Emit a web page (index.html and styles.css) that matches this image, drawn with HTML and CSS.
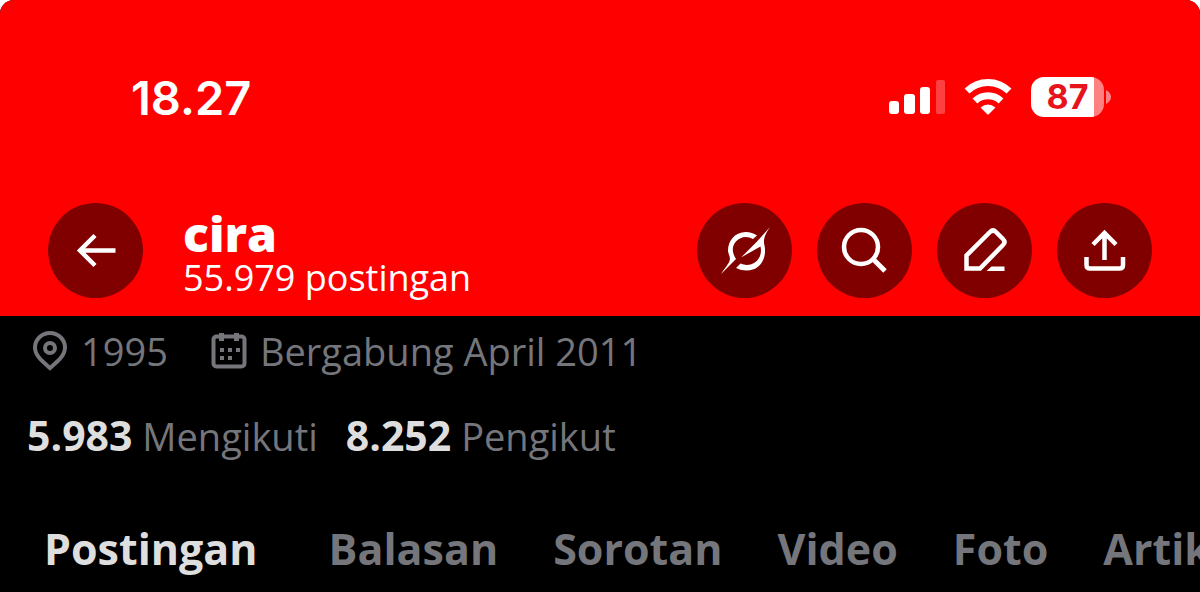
FILE: index.html
```html
<!DOCTYPE html>
<html lang="id">
<head>
    <meta charset="UTF-8">
    <meta name="viewport" content="width=device-width, initial-scale=1.0">
    <title>cira</title>
    <link rel="stylesheet" href="styles.css">
</head>
<body>
    <header class="banner">
        <div class="status-bar">
            <span class="time">18.27</span>
            <div class="status-icons">
                <svg class="signal" width="56" height="40" viewBox="0 0 56 40">
                    <rect x="0" y="24" width="10" height="13" rx="3" fill="#fff"/>
                    <rect x="15" y="17" width="11" height="20" rx="3" fill="#fff"/>
                    <rect x="31" y="10" width="10" height="27" rx="3" fill="#fff"/>
                    <rect x="47" y="3" width="9" height="34" rx="2" fill="#ff4040"/>
                </svg>
                <svg class="wifi" width="48" height="40" viewBox="0 0 48 40">
                    <path d="M3 14 A30 30 0 0 1 45 14" fill="none" stroke="#fff" stroke-width="7"/>
                    <path d="M11 24 A19 19 0 0 1 37 24" fill="none" stroke="#fff" stroke-width="7"/>
                    <path d="M16.500 30.500 Q24 24.500 31.500 30.500 L25 37 Q24 38 23 37 Z" fill="#fff"/>
                </svg>
                <div class="battery">
                    <span class="battery-level">87</span>
                    <svg class="battery-tip" width="5" height="14" viewBox="0 0 5 14">
                        <path d="M0 0 Q5 3 5 7 Q5 11 0 14 Z" fill="#ff8080"/>
                    </svg>
                </div>
            </div>
        </div>

        <div class="nav-bar">
            <button class="round-button" type="button" aria-label="Kembali">
                <svg width="95" height="95" viewBox="0 0 95 95">
                    <path d="M67.500 47.500 H32 M47 32.500 L32 47.500 L47 62.500" fill="none" stroke="#fff" stroke-width="4.500"/>
                </svg>
            </button>
            <div class="profile-title">
                <h1 class="name">cira</h1>
                <p class="post-count">55.979 postingan</p>
            </div>
            <div class="actions">
                <button class="round-button" type="button" aria-label="Grok">
                    <svg width="95" height="95" viewBox="0 0 95 95" fill="#fff">
                        <path d="M60 32.500 Q55 29 49 29 C37 29 31 38.500 31 47.500 C31 51 34 54 32.500 58 C31.500 61 28 65 24 71 L39 56 C34.500 49 35 43 39 38.500 C43.500 33.500 50 32.500 56 36 Z"/>
                        <path d="M44 54.500 L60 38.500 L73 24 C67.500 32 66 37 67.500 42.500 C70 54 64 67.500 49.500 67.500 Q44 67.500 39 65 L43.500 60.500 C54 65.500 66.500 57 63.500 43.500 Z"/>
                    </svg>
                </button>
                <button class="round-button" type="button" aria-label="Cari">
                    <svg width="95" height="95" viewBox="0 0 95 95">
                        <circle cx="44" cy="44" r="17" fill="none" stroke="#fff" stroke-width="4.500"/>
                        <path d="M56 56 L68 68" stroke="#fff" stroke-width="5"/>
                    </svg>
                </button>
                <button class="round-button" type="button" aria-label="Edit">
                    <svg width="95" height="95" viewBox="0 0 95 95">
                        <path d="M29.500 65.500 V52.500 L53 29 Q56 26 59 29 L66 36 Q69 39 66 42 L43 65.500 Z" fill="none" stroke="#fff" stroke-width="4.500"/>
                        <path d="M49.500 68 L54.500 63.500 H67.500 V68 Z" fill="#fff"/>
                    </svg>
                </button>
                <button class="round-button" type="button" aria-label="Bagikan">
                    <svg width="95" height="95" viewBox="0 0 95 95">
                        <path d="M47.500 57 V30 M36 41.500 L47.500 30 L59 41.500 M29.500 54 V62 Q29.500 65.500 33 65.500 H62.500 Q66 65.500 66 62 V54" fill="none" stroke="#fff" stroke-width="4.500"/>
                    </svg>
                </button>
            </div>
        </div>
    </header>

    <main class="profile">
        <div class="details">
            <span class="detail">
                <svg width="36" height="40" viewBox="0 0 36 40" fill="none" stroke="#75767b" stroke-width="4">
                    <path d="M18 37 C11 31 3 25 3 16.500 A15 14.500 0 0 1 33 16.500 C33 25 25 31 18 37 Z"/>
                    <circle cx="18" cy="17" r="5"/>
                </svg>
                1995
            </span>
            <span class="detail">
                <svg width="36" height="40" viewBox="0 0 36 40" fill="#75767b">
                    <rect x="2.500" y="5.500" width="31" height="30" rx="3" fill="none" stroke="#75767b" stroke-width="4"/>
                    <path d="M8 2h5v8h-5z M23 2h5v8h-5z M9 17h4v4h-4z M17 17h4v4h-4z M25 17h4v4h-4z M9 25h4v4h-4z M17 25h4v4h-4z"/>
                </svg>
                Bergabung April 2011
            </span>
        </div>

        <div class="stats">
            <a class="stat" href="#"><strong>5.983</strong> Mengikuti</a>
            <a class="stat" href="#"><strong>8.252</strong> Pengikut</a>
        </div>

        <nav class="tabs">
            <a class="tab active" href="#">Postingan</a>
            <a class="tab" href="#">Balasan</a>
            <a class="tab" href="#">Sorotan</a>
            <a class="tab" href="#">Video</a>
            <a class="tab" href="#">Foto</a>
            <a class="tab" href="#">Artikel</a>
        </nav>
    </main>
</body>
</html>
```
FILE: styles.css
```css
html {
    background-color: #fff;
}
body {
    margin: 0;
    min-height: 100vh;
    border-radius: 14px 14px 0 0;
    overflow: hidden;
    background-color: #000;
    color: #75767b;
    font-family: "Open Sans", sans-serif;
}
.banner {
    background-color: #f00;
    color: #fff;
    padding: 72px 48px 18px;
}
.status-bar {
    display: flex;
    align-items: center;
    justify-content: space-between;
    height: 50px;
    padding: 0 41px 0 83px;
    margin-bottom: 81px;
    font-family: Inter, sans-serif;
}
.time {
    font-size: 47px;
    font-weight: 600;
}
.status-icons {
    display: flex;
    align-items: center;
    gap: 19px;
}
.battery {
    display: flex;
    align-items: center;
    gap: 2px;
}
.battery-level {
    width: 73px;
    height: 40px;
    border-radius: 13px;
    background: linear-gradient(to right, #fff 63px, #ff8080 63px);
    color: #e8141c;
    font-size: 34px;
    font-weight: 700;
    line-height: 40px;
    text-align: center;
}
.nav-bar {
    display: flex;
    align-items: center;
}
.round-button {
    display: flex;
    width: 95px;
    height: 95px;
    padding: 0;
    border: none;
    border-radius: 50%;
    background-color: #800000;
    cursor: pointer;
}
.profile-title {
    flex: 1;
    margin-left: 40px;
    padding-top: 6px;
}
.name {
    margin: 0;
    font-size: 48px;
    font-weight: 800;
    line-height: 48px;
}
.post-count {
    margin: 0;
    font-size: 36px;
    line-height: 40px;
}
.actions {
    display: flex;
    gap: 25px;
}
.details {
    display: flex;
    gap: 43px;
    padding: 10px 32px 0;
    font-size: 38px;
    line-height: 50px;
}
.detail {
    display: flex;
    align-items: center;
    gap: 13px;
}
.stats {
    display: flex;
    gap: 28px;
    padding: 34px 27px 0;
    font-size: 38px;
    line-height: 50px;
}
.stat {
    color: #75767b;
    text-decoration: none;
}
.stat strong {
    color: #dedede;
    font-size: 41px;
    font-weight: 700;
}
.tabs {
    display: flex;
    gap: 55px;
    padding: 58px 0 14px 44px;
    font-size: 43px;
    font-weight: 700;
    line-height: 60px;
    overflow: hidden;
}
.tab {
    color: #75767b;
    text-decoration: none;
}
.tab.active {
    color: #dedede;
    margin-right: 16px;
}
```
